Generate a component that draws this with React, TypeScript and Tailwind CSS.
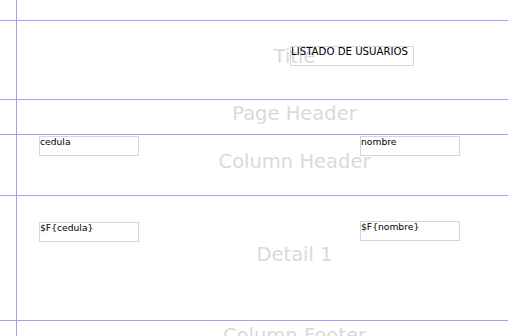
const font = { fontFamily: '"DejaVu Sans", sans-serif' }

type Field = { text: string; left: string; top: string; size: string }

const Band = ({ label, height, fields = [] }: { label?: string; height: string; fields?: Field[] }) => {
  return (
    <div className={`flex shrink-0 border-b border-[#a0a0ff] ${height}`}>
      <div className="w-[17px] shrink-0 border-r border-[#a0a0ff]" />
      <div className="relative flex w-[555px] shrink-0 items-center justify-center pb-[7px]">
        {label && <span className="text-[19.5px] leading-none text-[#dadada]">{label}</span>}
        {fields.map((f) => (
          <div
            key={f.text}
            className={`absolute ${f.left} ${f.top} ${f.size} h-[20px] border border-[#d6d6d6] leading-none text-black`}
          >
            {f.text}
          </div>
        ))}
      </div>
    </div>
  )
}

const App = () => {
  return (
    <div className="flex h-[336px] w-[508px] flex-col overflow-hidden bg-white" style={font}>
      <Band height="h-[21px]" />
      <Band
        label="Title"
        height="h-[79px]"
        fields={[{ text: 'LISTADO DE USUARIOS', left: 'left-[273px]', top: 'top-[25px]', size: 'w-[124px] text-[10.2px]' }]}
      />
      <Band label="Page Header" height="h-[35px]" />
      <Band
        label="Column Header"
        height="h-[61px]"
        fields={[
          { text: 'cedula', left: 'left-[22px]', top: 'top-[1px]', size: 'w-[100px] text-[9.2px]' },
          { text: 'nombre', left: 'left-[343px]', top: 'top-[1px]', size: 'w-[100px] text-[9.2px]' },
        ]}
      />
      <Band
        label="Detail 1"
        height="h-[125px]"
        fields={[
          { text: '$F{cedula}', left: 'left-[22px]', top: 'top-[26px]', size: 'w-[100px] text-[9.2px]' },
          { text: '$F{nombre}', left: 'left-[343px]', top: 'top-[25px]', size: 'w-[100px] text-[9.2px]' },
        ]}
      />
      <Band label="Column Footer" height="h-[38px]" />
    </div>
  )
}

export default App
